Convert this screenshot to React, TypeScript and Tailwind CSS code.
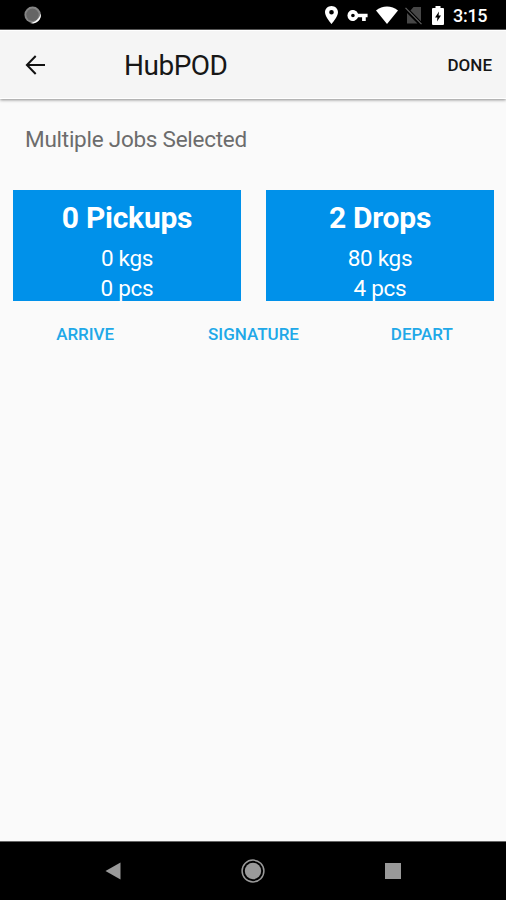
import React from "react";

const actions = ["ARRIVE", "SIGNATURE", "DEPART"];

const summaries = [
  { title: "0 Pickups", weight: "0 kgs", pieces: "0 pcs" },
  { title: "2 Drops", weight: "80 kgs", pieces: "4 pcs" },
];

function StatusBar() {
  return (
    <div className="flex h-[30px] shrink-0 items-start border-b border-[#5c5c5c] bg-black pl-6 text-white">
      <svg className="mt-[6px] h-[18px] w-[18px]" viewBox="0 0 18 18">
        <circle cx="8.6" cy="8.8" r="8.2" fill="#858585" />
        <path d="M16.8 7.5A8.4 8.4 0 0 1 6 17C11.5 16.4 15.2 13 16.8 7.5Z" fill="#fff" />
        <circle cx="8.5" cy="8.8" r="6.2" fill="#656565" />
      </svg>
      <svg className="ml-[283px] mt-[6px] h-[18px] w-[13px]" viewBox="5 2 14 20" preserveAspectRatio="none" fill="currentColor">
        <path d="M12 2C8.13 2 5 5.13 5 9c0 5.25 7 13 7 13s7-7.75 7-13c0-3.87-3.13-7-7-7zm0 9.5a2.5 2.5 0 1 1 0-5 2.5 2.5 0 0 1 0 5z" />
      </svg>
      <svg className="ml-[9px] mt-[10px] h-[11px] w-[21px]" viewBox="1 6 22 12" fill="currentColor">
        <path d="M12.65 10A6 6 0 1 0 12.65 14H17v4h4v-4h2v-4H12.65zM7 14a2 2 0 1 1 0-4 2 2 0 0 1 0 4z" />
      </svg>
      <svg className="ml-[8px] mt-[6px] h-[18px] w-[22px]" viewBox="0 0 23 18" preserveAspectRatio="none" fill="currentColor">
        <path d="M0 4.4C6.5-.8 16.5-.8 23 4.4L11.5 18Z" />
      </svg>
      <svg className="ml-[7px] mt-[6px] h-[19px] w-[18px]" viewBox="0 0 18 19">
        <path d="M16 1v14.2L5.5 4.4 8.5 1ZM2 7l10.5 10.5H2Z" fill="#474747" />
        <path d="m.5 1.8 16 16.4" stroke="#606060" strokeWidth="1.2" />
      </svg>
      <svg className="ml-[9px] mt-[6px] h-[19px] w-[12px]" viewBox="0 0 12 19">
        <path d="M1 2h2.5V0h5v2H11q1 0 1 1v15q0 1-1 1H1q-1 0-1-1V3q0-1 1-1Z" fill="#fff" />
        <path d="m7 5.5-4 6h2.4L5 15.5l4-6H6.6Z" fill="#000" />
      </svg>
      <span className="ml-[9px] mt-[6px] text-[18px] font-medium leading-5 tracking-[-0.3px]">3:15</span>
    </div>
  );
}

function Header() {
  return (
    <header className="z-10 flex h-[69px] shrink-0 items-center border-y border-white bg-[#f5f5f5] pl-[25px] pr-[14px] text-[#171717] shadow-[0_1px_3px_rgba(0,0,0,0.45)]">
      <svg className="h-5 w-[21px]" viewBox="0 0 21 20" fill="none" stroke="#111" strokeWidth="2">
        <path d="M20 10H2M10.7 1 1.9 10l8.8 9" />
      </svg>
      <h1 className="ml-[78px] mt-[2px] text-[28px] leading-8 tracking-[-0.5px]">HubPOD</h1>
      <button className="ml-auto text-[17px] font-medium leading-5">DONE</button>
    </header>
  );
}

function SystemNavigation() {
  return (
    <nav className="flex h-[59px] shrink-0 items-center border-t border-[#666] bg-black pl-[105px]">
      <svg className="h-[18px] w-[16px]" viewBox="0 0 16 18">
        <path d="M.5 9 15.5.5v17Z" fill="#999" />
      </svg>
      <svg className="ml-[120px] h-6 w-6" viewBox="0 0 24 24">
        <circle cx="12" cy="12" r="10.9" fill="none" stroke="#999" strokeWidth="1.5" />
        <circle cx="12" cy="12" r="8.2" fill="#999" />
      </svg>
      <div className="ml-[120px] h-4 w-4 bg-[#999]" />
    </nav>
  );
}

export default function App() {
  return (
    <div className="flex h-[900px] w-[506px] flex-col overflow-hidden bg-[#fafafa] font-['Roboto',sans-serif]">
      <StatusBar />
      <Header />
      <main className="flex-1">
        <h2 className="ml-[25px] mt-[26px] text-[22.5px] leading-7 tracking-[-0.25px] text-[#6c6c6c]">Multiple Jobs Selected</h2>
        <section className="mt-[37px] grid grid-cols-2 gap-[25px] pl-[13px] pr-[12px]">
          {summaries.map((item) => (
            <div key={item.title} className="h-[111px] bg-[#0091ea] text-center text-white">
              <h3 className="mt-[10px] text-[30px] font-bold leading-9 tracking-[-0.25px]">{item.title}</h3>
              <p className="mt-[7px] text-[22.5px] leading-[30px] tracking-[-0.3px]">{item.weight}</p>
              <p className="text-[22.5px] leading-[30px] tracking-[-0.3px]">{item.pieces}</p>
            </div>
          ))}
        </section>
        <div className="mt-[21px] grid grid-cols-3 pl-px">
          {actions.map((label) => (
            <button key={label} className="text-[17px] font-medium leading-6 text-[#20a8e8]">
              {label}
            </button>
          ))}
        </div>
      </main>
      <SystemNavigation />
    </div>
  );
}
